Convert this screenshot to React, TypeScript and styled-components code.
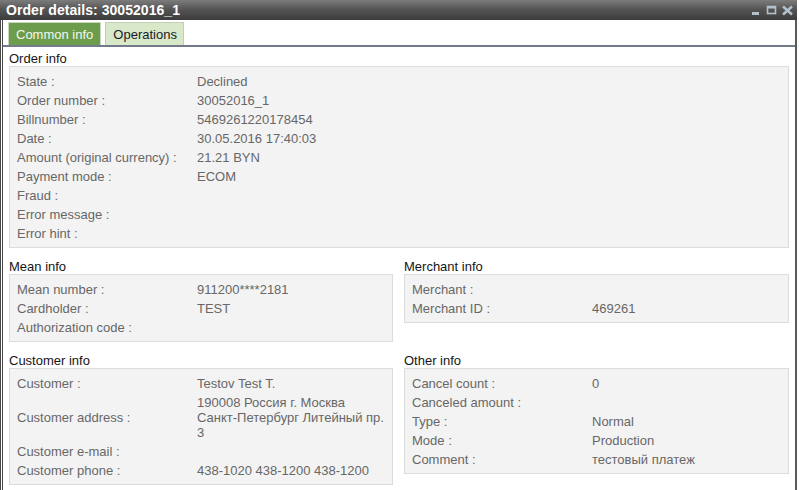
import React from "react";
import styled, { createGlobalStyle } from "styled-components";

const Global = createGlobalStyle`
  html, body { margin: 0; padding: 0; background: #ffffff; }
  body { font-family: "Liberation Sans", Arial, sans-serif; }
  * { box-sizing: border-box; }
`;

const Window = styled.div`
  width: 797px;
  height: 490px;
  display: flex;
  flex-direction: column;
  overflow: hidden;
`;

const TitleBar = styled.div`
  height: 20px;
  flex: none;
  display: flex;
  align-items: center;
  justify-content: space-between;
  padding: 0 4px 0 6px;
  background: linear-gradient(#7c7c7c 0%, #555555 45%, #3c3c3c 100%);
  width: 799px;
`;

const Title = styled.div`
  color: #ffffff;
  font-weight: bold;
  font-size: 14px;
  line-height: 20px;
  letter-spacing: 0.05px;
`;

const Controls = styled.div`
  display: flex;
  align-items: center;
  margin-top: 1px;
`;

const Body = styled.div`
  flex: 1;
  display: flex;
  flex-direction: column;
  border-left: 3px double #4a4a4a;
  border-right: 2px solid #5a5a5a;
  background: #ffffff;
  min-height: 0;
`;

const TabStrip = styled.div`
  display: flex;
  gap: 4px;
  padding: 2px 0 0 5px;
  border-bottom: 2px solid #737b8b;
`;

const Tab = styled.div<{ $active?: boolean }>`
  height: 23px;
  padding: 0 ${(p) => (p.$active ? "7px" : "6px")} 0 ${(p) => (p.$active ? "7px" : "7px")};
  display: flex;
  align-items: center;
  font-size: 13px;
  color: ${(p) => (p.$active ? "#f4f8f0" : "#1a1a2a")};
  background: ${(p) => (p.$active ? "#6b9d4d" : "#d8e8c9")};
  border: 1px solid ${(p) => (p.$active ? "#c9d6c0" : "#c2cfb6")};
  border-bottom: none;
`;

const Content = styled.div`
  padding: 4px 6px 0 6px;
  display: flex;
  flex-direction: column;
  gap: 11px;
`;

const Columns = styled.div`
  display: grid;
  grid-template-columns: 384px 1fr;
  column-gap: 11px;
  row-gap: 11px;
  align-items: start;
`;

const Section = styled.div`
  display: flex;
  flex-direction: column;
`;

const SectionTitle = styled.div`
  font-size: 13px;
  line-height: 15px;
  color: #151515;
`;

const Box = styled.div`
  background: #f3f3f3;
  border: 1px solid #dcdcdc;
  padding: 5px 8px 4px 7px;
`;

const Row = styled.div`
  display: grid;
  grid-template-columns: 180px 1fr;
  align-items: center;
  padding: 2px 0;
  font-size: 13px;
  line-height: 15px;
  color: #676767;
`;

const Label = styled.div``;
const Value = styled.div``;

type Item = [string, React.ReactNode];

const Fields: React.FC<{ title: string; items: Item[] }> = ({ title, items }) => (
  <Section>
    <SectionTitle>{title}</SectionTitle>
    <Box>
      {items.map(([l, v]) => (
        <Row key={l}>
          <Label>{l} :</Label>
          <Value>{v}</Value>
        </Row>
      ))}
    </Box>
  </Section>
);

const WinIcons = () => (
  <svg width="44" height="12" viewBox="0 0 44 12" fill="none">
    <rect x="1" y="7" width="7" height="3" fill="#b3c1cc" />
    <rect x="16.5" y="1.5" width="8" height="7" stroke="#b3c1cc" strokeWidth="1.6" />
    <rect x="16" y="1" width="9" height="2.5" fill="#b3c1cc" />
    <path d="M32 1.5 L41 9.5 M41 1.5 L32 9.5" stroke="#b3c1cc" strokeWidth="2.4" />
  </svg>
);

export default function App() {
  return (
    <>
      <Global />
      <Window>
        <TitleBar>
          <Title>Order details: 30052016_1</Title>
          <Controls>
            <WinIcons />
          </Controls>
        </TitleBar>
        <Body>
          <TabStrip>
            <Tab $active>Common info</Tab>
            <Tab>Operations</Tab>
          </TabStrip>
          <Content>
            <Fields
              title="Order info"
              items={[
                ["State", "Declined"],
                ["Order number", "30052016_1"],
                ["Billnumber", "5469261220178454"],
                ["Date", "30.05.2016 17:40:03"],
                ["Amount (original currency)", "21.21 BYN"],
                ["Payment mode", "ECOM"],
                ["Fraud", ""],
                ["Error message", ""],
                ["Error hint", ""],
              ]}
            />
            <Columns>
              <Fields
                title="Mean info"
                items={[
                  ["Mean number", "911200****2181"],
                  ["Cardholder", "TEST"],
                  ["Authorization code", ""],
                ]}
              />
              <Fields
                title="Merchant info"
                items={[
                  ["Merchant", ""],
                  ["Merchant ID", "469261"],
                ]}
              />
              <Fields
                title="Customer info"
                items={[
                  ["Customer", "Testov Test T."],
                  [
                    "Customer address",
                    <>
                      190008 Россия г. Москва
                      <br />
                      Санкт-Петербург Литейный пр.
                      <br />3
                    </>,
                  ],
                  ["Customer e-mail", ""],
                  ["Customer phone", "438-1020 438-1200 438-1200"],
                ]}
              />
              <Fields
                title="Other info"
                items={[
                  ["Cancel count", "0"],
                  ["Canceled amount", ""],
                  ["Type", "Normal"],
                  ["Mode", "Production"],
                  ["Comment", "тестовый платеж"],
                ]}
              />
            </Columns>
          </Content>
        </Body>
      </Window>
    </>
  );
}
